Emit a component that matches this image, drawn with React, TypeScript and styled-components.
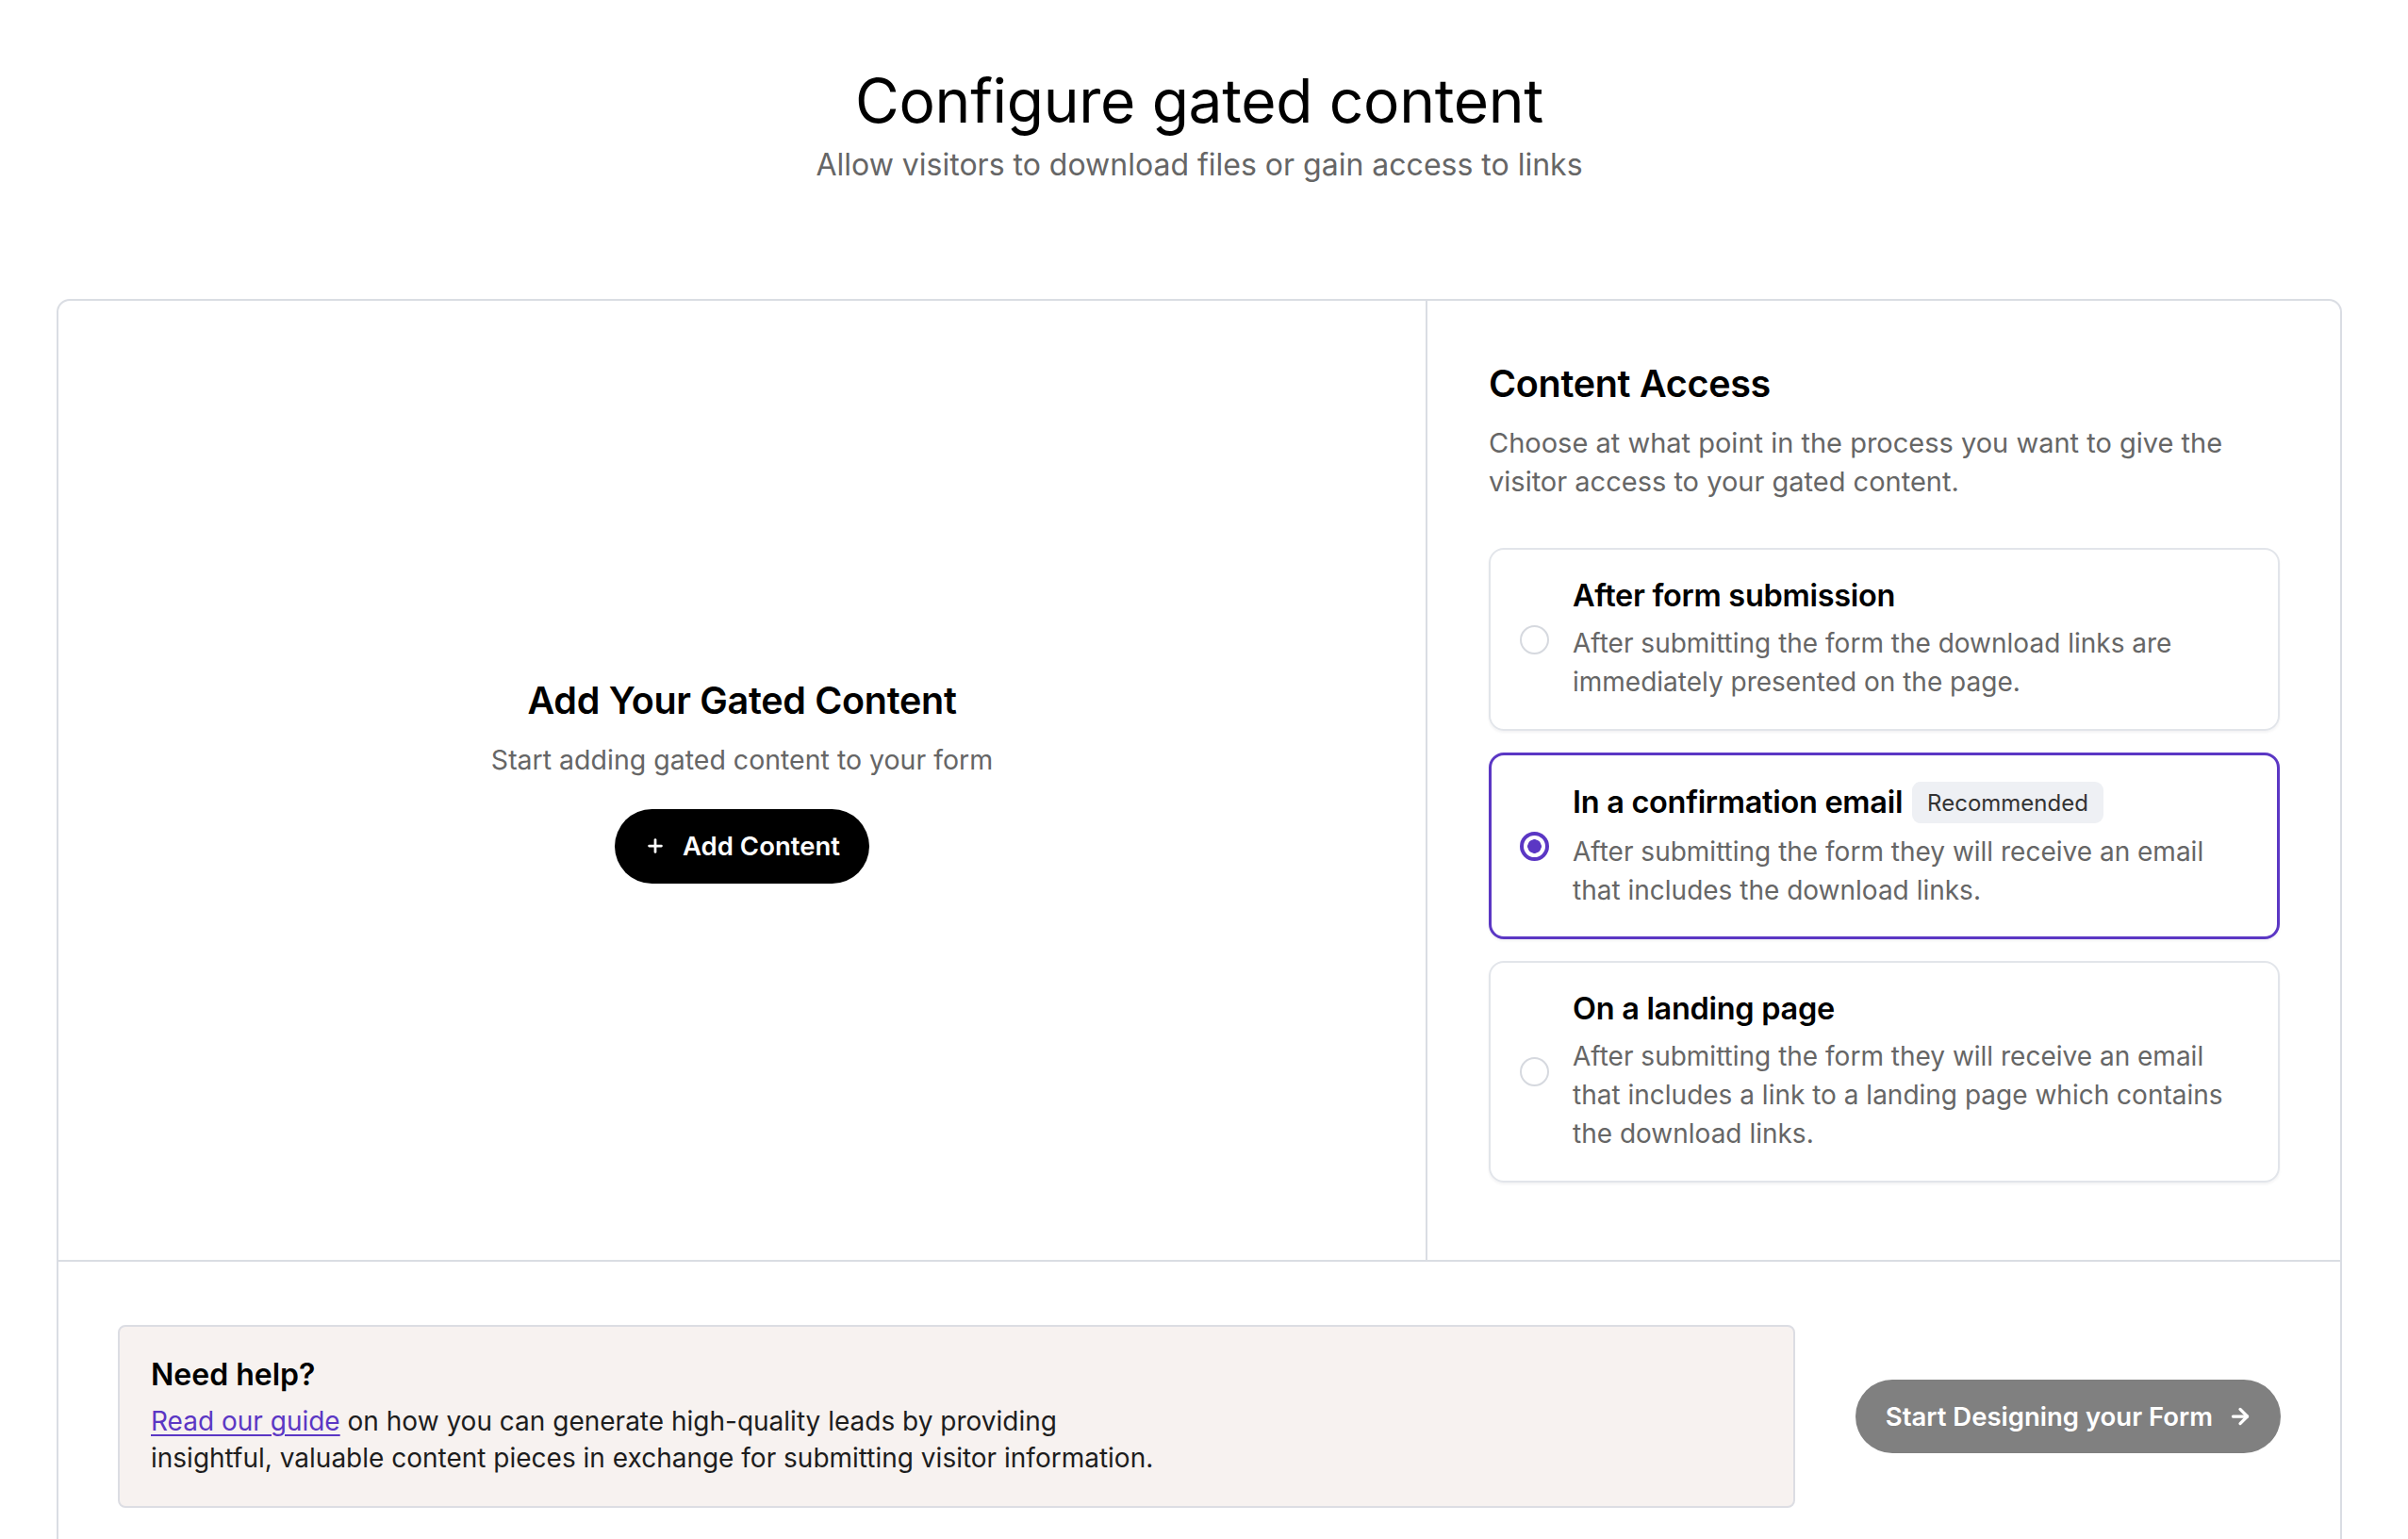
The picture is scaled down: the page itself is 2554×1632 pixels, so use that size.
import React, { useState } from "react";
import styled, { createGlobalStyle } from "styled-components";
import { Plus, ArrowRight } from "lucide-react";

const PURPLE = "#5b37c4";
const LINE = "#dadde3";

type AccessOption = {
  id: string;
  title: string;
  description: string;
  badge?: string;
};

const options: AccessOption[] = [
  {
    id: "after-submit",
    title: "After form submission",
    description:
      "After submitting the form the download links are immediately presented on the page.",
  },
  {
    id: "email",
    title: "In a confirmation email",
    badge: "Recommended",
    description:
      "After submitting the form they will receive an email that includes the download links.",
  },
  {
    id: "landing",
    title: "On a landing page",
    description:
      "After submitting the form they will receive an email that includes a link to a landing page which contains the download links.",
  },
];

const App: React.FC = () => {
  const [selected, setSelected] = useState("email");

  return (
    <>
      <GlobalStyle />
      <Page>
        <Header>
          <Title>Configure gated content</Title>
          <Subtitle>Allow visitors to download files or gain access to links</Subtitle>
        </Header>

        <Card>
          <Columns>
            <EmptyPanel>
              <PanelHeading>Add Your Gated Content</PanelHeading>
              <EmptyText>Start adding gated content to your form</EmptyText>
              <DarkButton type="button">
                <Plus size={22} strokeWidth={3} />
                Add Content
              </DarkButton>
            </EmptyPanel>

            <AccessPanel>
              <PanelHeading>Content Access</PanelHeading>
              <AccessText>
                Choose at what point in the process you want to give the visitor access to
                your gated content.
              </AccessText>
              <OptionList>
                {options.map((opt) => {
                  const active = opt.id === selected;
                  return (
                    <OptionCard
                      key={opt.id}
                      $active={active}
                      onClick={() => setSelected(opt.id)}
                    >
                      <Radio $checked={active} />
                      <OptionBody>
                        <OptionTitleRow>
                          <OptionTitle>{opt.title}</OptionTitle>
                          {opt.badge && <Badge>{opt.badge}</Badge>}
                        </OptionTitleRow>
                        <OptionText>{opt.description}</OptionText>
                      </OptionBody>
                    </OptionCard>
                  );
                })}
              </OptionList>
            </AccessPanel>
          </Columns>

          <Footer>
            <HelpBox>
              <HelpTitle>Need help?</HelpTitle>
              <HelpText>
                <GuideLink href="#">Read our guide</GuideLink> on how you can generate
                high-quality leads by providing
                <br />
                insightful, valuable content pieces in exchange for submitting visitor
                information.
              </HelpText>
            </HelpBox>
            <GreyButton type="button">
              Start Designing your Form
              <ArrowRight size={26} strokeWidth={3} />
            </GreyButton>
          </Footer>
        </Card>
      </Page>
    </>
  );
};

// --- Styles ---

const GlobalStyle = createGlobalStyle`
  body {
    margin: 0;
    background: #ffffff;
    font-family: Inter, "Noto Sans", sans-serif;
    color: #000;
  }
`;

const Page = styled.div`
  padding: 68px 70px 0 60px;
`;

const Header = styled.header`
  display: flex;
  flex-direction: column;
  align-items: center;
  gap: 9px;
  margin-bottom: 121px;
`;

const Title = styled.h1`
  margin: 0;
  font-size: 64px;
  line-height: 77px;
  font-weight: 400;
  letter-spacing: -0.3px;
`;

const Subtitle = styled.p`
  margin: 0;
  font-size: 32px;
  line-height: 42px;
  color: #666;
`;

const Card = styled.section`
  border: 2px solid ${LINE};
  border-radius: 14px;
  overflow: hidden;
`;

const Columns = styled.div`
  display: grid;
  grid-template-columns: 3fr 2fr;
  border-bottom: 2px solid ${LINE};
`;

const EmptyPanel = styled.div`
  display: flex;
  flex-direction: column;
  align-items: center;
  justify-content: center;
  border-right: 2px solid ${LINE};
`;

const PanelHeading = styled.h2`
  margin: 0;
  font-size: 39.5px;
  line-height: 48px;
  font-weight: 600;
  letter-spacing: -0.3px;
`;

const EmptyText = styled.p`
  margin: 19px 0 32px;
  font-size: 28.5px;
  line-height: 40px;
  color: #666;
`;

const DarkButton = styled.button`
  display: flex;
  align-items: center;
  gap: 18px;
  height: 79px;
  padding: 0 31px 0 32px;
  border: none;
  border-radius: 40px;
  background: #000;
  color: #fff;
  font-family: inherit;
  font-size: 27.5px;
  font-weight: 600;
  cursor: pointer;
`;

const AccessPanel = styled.div`
  padding: 64px 64px 82px 65px;
`;

const AccessText = styled.p`
  margin: 18px 0 50px;
  font-size: 29px;
  line-height: 41px;
  color: #666;
`;

const OptionList = styled.div`
  display: flex;
  flex-direction: column;
  gap: 23px;
`;

const OptionCard = styled.div<{ $active: boolean }>`
  display: flex;
  align-items: center;
  gap: 25px;
  padding: ${({ $active }) => ($active ? "28px 28px 28px 30px" : "29px 29px 29px 31px")};
  border: ${({ $active }) => ($active ? `3px solid ${PURPLE}` : `2px solid #e2e5ea`)};
  border-radius: 16px;
  box-shadow: 0 2px 3px rgba(16, 24, 40, 0.05);
  cursor: pointer;
`;

const Radio = styled.span<{ $checked: boolean }>`
  flex: none;
  box-sizing: border-box;
  width: 31px;
  height: 31px;
  border-radius: 50%;
  border: ${({ $checked }) => ($checked ? `4px solid ${PURPLE}` : "2px solid #d6d9df")};
  background: ${({ $checked }) =>
    $checked ? `radial-gradient(circle, ${PURPLE} 0 7px, #fff 7.5px)` : "#fff"};
`;

const OptionBody = styled.div`
  display: flex;
  flex-direction: column;
  gap: 10px;
`;

const OptionTitleRow = styled.div`
  display: flex;
  align-items: center;
  gap: 10px;
`;

const OptionTitle = styled.h3`
  margin: 0;
  font-size: 32.5px;
  line-height: 40px;
  font-weight: 600;
  letter-spacing: -0.3px;
`;

const Badge = styled.span`
  display: inline-flex;
  align-items: center;
  height: 44px;
  padding: 0 16px;
  border-radius: 9px;
  background: #eef0f4;
  font-size: 24px;
  color: #333;
`;

const OptionText = styled.p`
  margin: 0;
  font-size: 28px;
  line-height: 41px;
  color: #666;
`;

const Footer = styled.div`
  display: flex;
  align-items: center;
  gap: 64px;
  padding: 67px 63px 70px 63px;
`;

const HelpBox = styled.div`
  flex: 1;
  padding: 31px 33px 31px;
  border: 2px solid #dcdde3;
  border-radius: 8px;
  background: #f7f2f0;
`;

const HelpTitle = styled.h4`
  margin: 0 0 10px;
  font-size: 32px;
  line-height: 40px;
  font-weight: 600;
`;

const HelpText = styled.p`
  margin: 0;
  font-size: 28px;
  line-height: 39px;
  color: #1d1d1d;
`;

const GuideLink = styled.a`
  color: ${PURPLE};
  text-decoration: underline;
  text-decoration-thickness: 2px;
  text-underline-offset: 4px;
`;

const GreyButton = styled.button`
  display: flex;
  align-items: center;
  gap: 16px;
  height: 78px;
  padding: 0 30px 0 32px;
  border: none;
  border-radius: 40px;
  background: #808080;
  color: #fff;
  font-family: inherit;
  font-size: 27.5px;
  font-weight: 600;
  white-space: nowrap;
  cursor: pointer;
`;

export default App;
